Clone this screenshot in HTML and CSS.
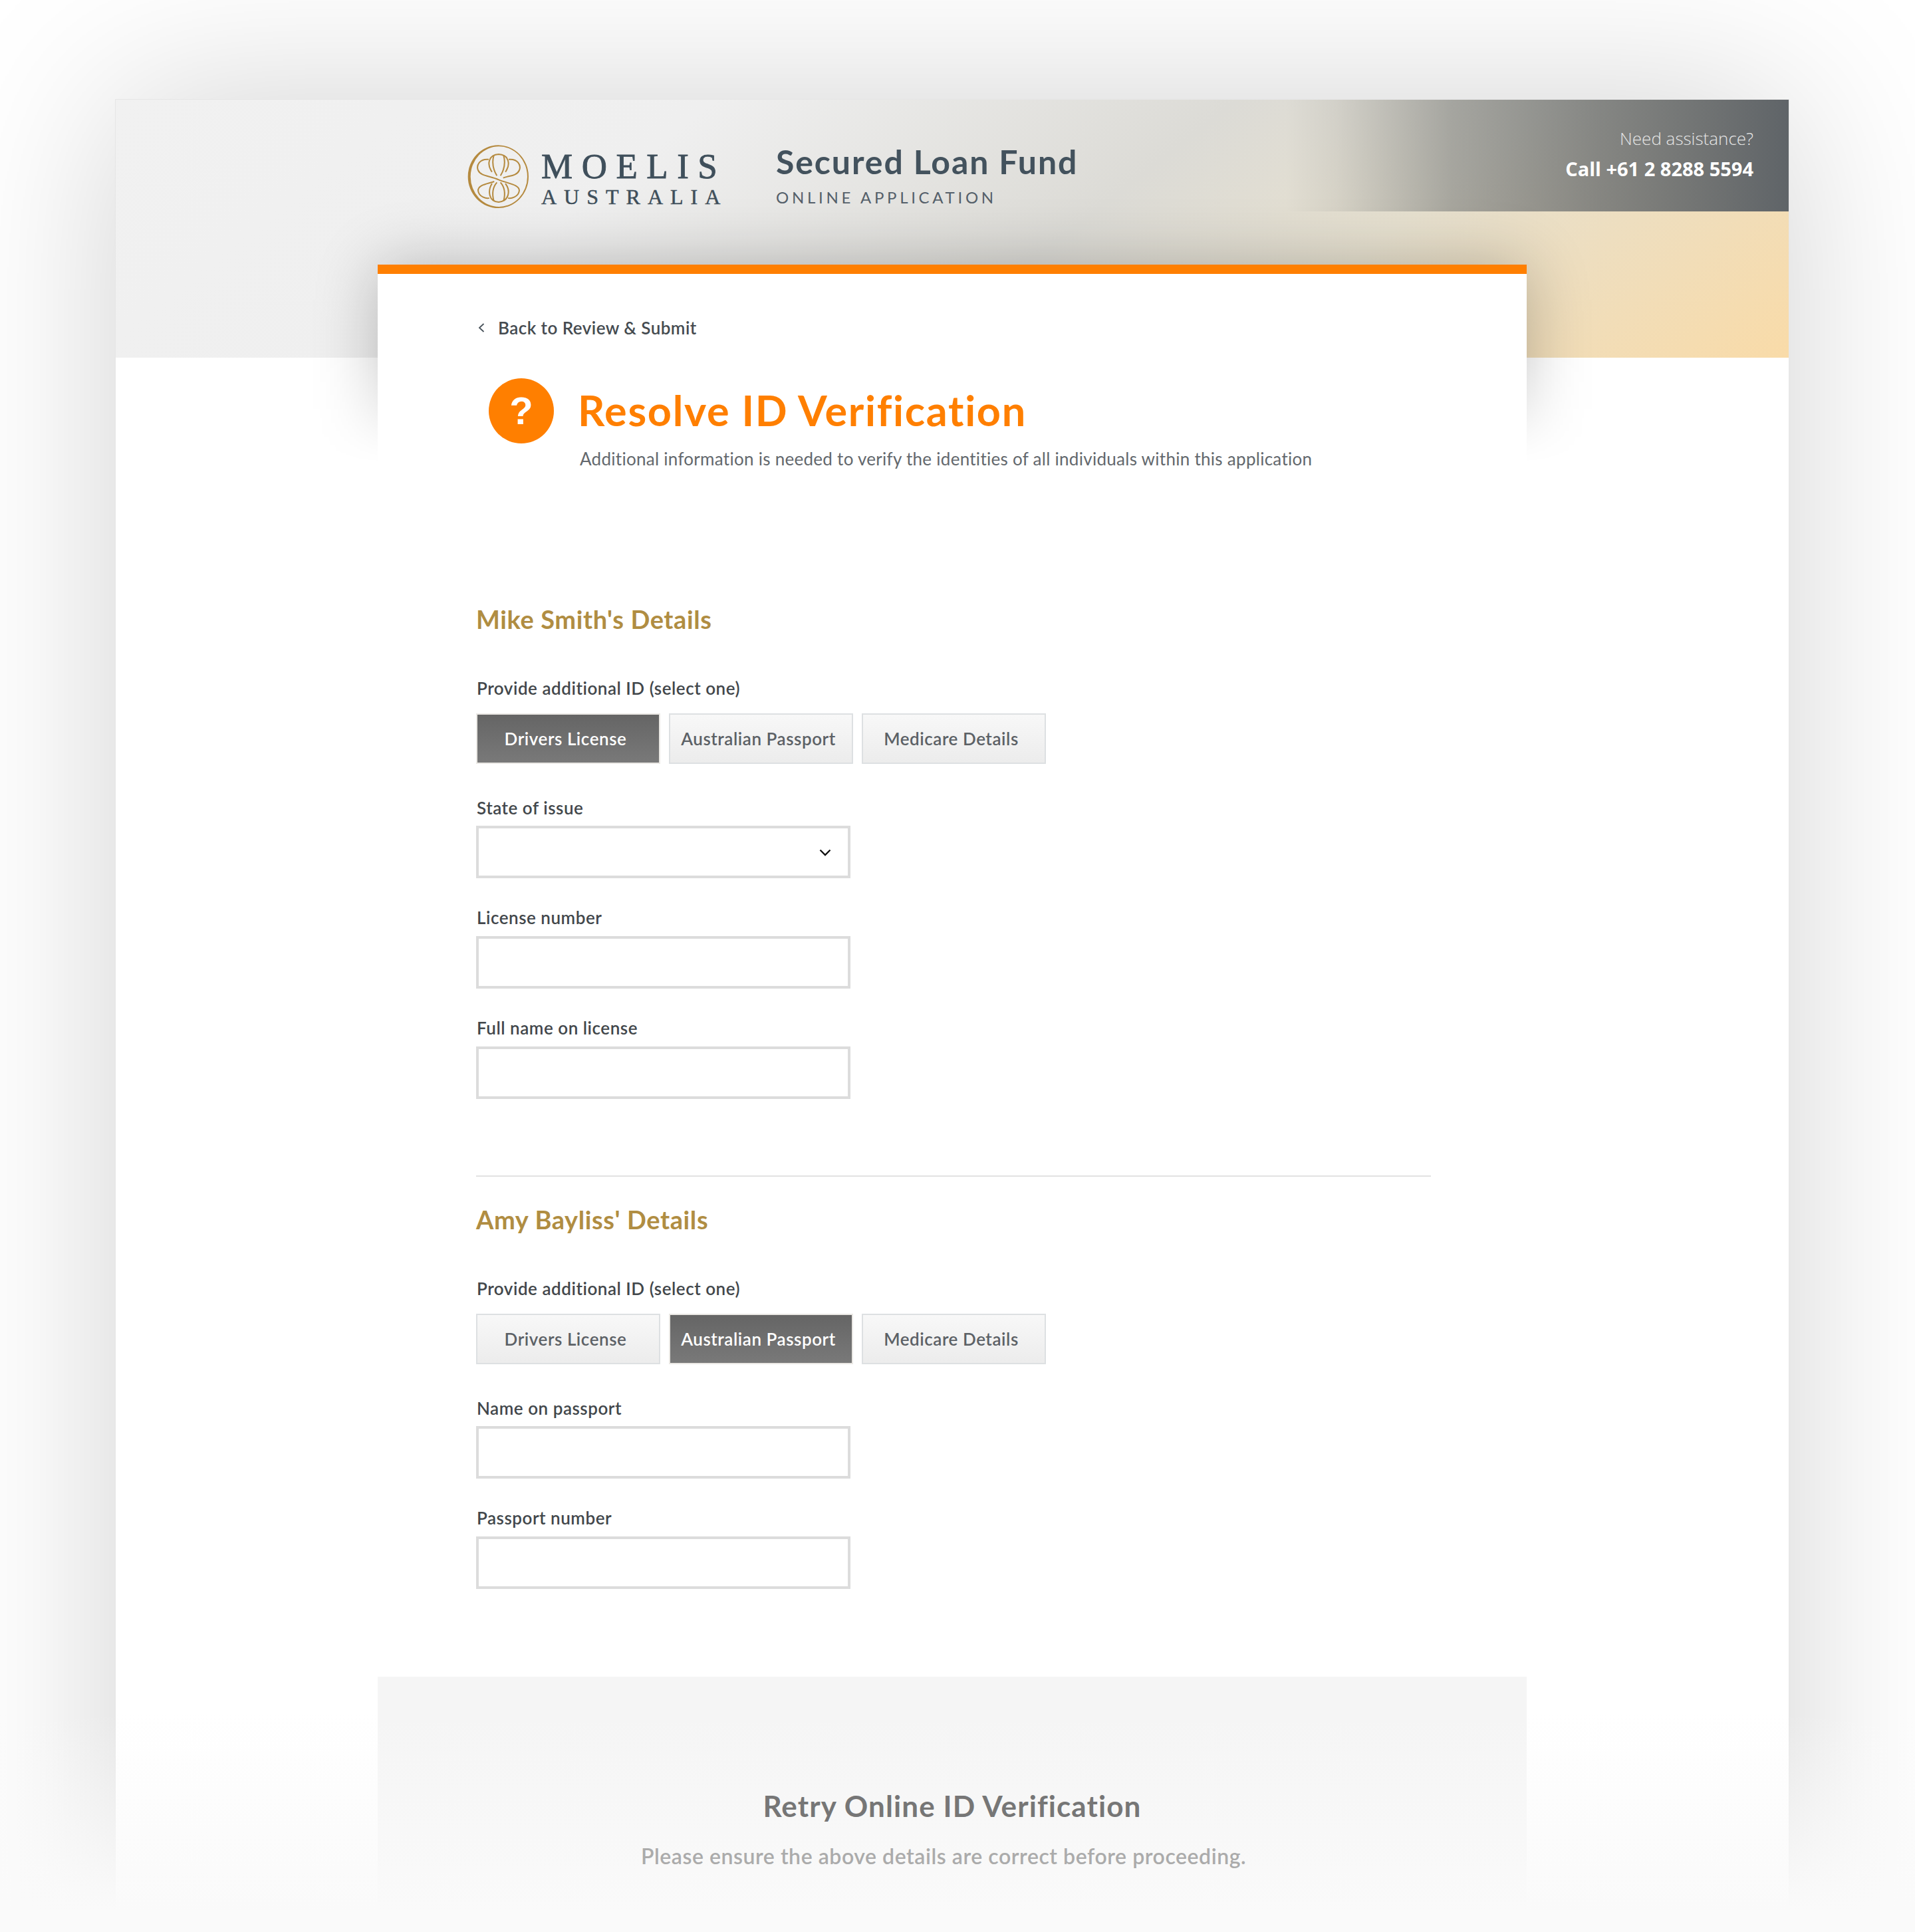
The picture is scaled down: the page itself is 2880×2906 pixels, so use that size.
FILE: index.html
```html
<!DOCTYPE html>
<html lang="en">
<head>
<meta charset="utf-8">
<title>Resolve ID Verification</title>
<link rel="stylesheet" href="styles.css">
</head>
<body>
<div class="page">
  <div class="window">
    <header class="top">
      <svg class="emblem" viewBox="40 84 280 286" aria-hidden="true">
        <path class="emblem-fill" fill-rule="evenodd" d="M42 226a136 141 0 1 0 272 0a136 141 0 1 0-272 0ZM54 226a127 135 0 1 0 254 0a127 135 0 1 0-254 0Z"/>
        <g class="emblem-line">
          <path d="M135 149C95 145 78 175 88 198C100 225 140 222 180 240C225 258 275 262 272 290C268 318 235 325 222 322"/>
          <path d="M225 149C265 145 282 175 272 198C260 225 222 222 200 232"/>
          <path d="M160 248C135 258 85 262 88 290C92 318 125 325 138 322"/>
          <path d="M150 205C125 170 135 128 180 126C225 128 235 170 210 205"/>
          <path d="M158 131C150 160 152 190 172 222"/>
          <path d="M202 131C210 160 208 190 188 222"/>
          <path d="M150 257C130 290 135 338 180 340C225 338 235 290 210 257"/>
          <path d="M172 252C152 275 150 305 158 335"/>
          <path d="M188 252C208 275 210 305 202 335"/>
        </g>
      </svg>
      <div class="wordmark">
        <span class="wordmark-main">MOELIS</span>
        <span class="wordmark-sub">AUSTRALIA</span>
      </div>
      <div class="product">
        <div class="product-name">Secured Loan Fund</div>
        <div class="product-sub">ONLINE APPLICATION</div>
      </div>
      <div class="help">
        <div class="help-q">Need assistance?</div>
        <div class="help-tel">Call +61 2 8288 5594</div>
      </div>
    </header>

    <div class="card-wrap">
      <div class="card-glow"></div>
      <main class="card">
        <div class="card-body">
          <a class="back">
            <svg class="back-icon" viewBox="0 0 10 14" aria-hidden="true"><path d="M8.5 1L2 7l6.500 6"/></svg>
            <span>Back to Review &amp; Submit</span>
          </a>
          <div class="intro">
            <div class="badge">?</div>
            <div class="intro-text">
              <h1>Resolve ID Verification</h1>
              <p>Additional information is needed to verify the identities of all individuals within this application</p>
            </div>
          </div>

          <section class="person person-first">
            <h2>Mike Smith's Details</h2>
            <div class="label label-choice">Provide additional ID (select one)</div>
            <div class="choices">
              <button class="choice is-on">Drivers License</button>
              <button class="choice">Australian Passport</button>
              <button class="choice">Medicare Details</button>
            </div>
            <label class="label label-after-choice">State of issue</label>
            <div class="select-wrap">
              <select class="field"></select>
              <svg class="select-icon" viewBox="0 0 18 11" aria-hidden="true"><path d="M1.500 1.500L9 9l7.500-7.500"/></svg>
            </div>
            <label class="label label-field">License number</label>
            <input class="field" type="text">
            <label class="label label-field">Full name on license</label>
            <input class="field" type="text">
          </section>

          <hr class="rule">

          <section class="person">
            <h2>Amy Bayliss' Details</h2>
            <div class="label label-choice">Provide additional ID (select one)</div>
            <div class="choices">
              <button class="choice">Drivers License</button>
              <button class="choice is-on">Australian Passport</button>
              <button class="choice">Medicare Details</button>
            </div>
            <label class="label label-after-choice">Name on passport</label>
            <input class="field" type="text">
            <label class="label label-field">Passport number</label>
            <input class="field" type="text">
          </section>
        </div>

        <footer class="retry">
          <h3>Retry Online ID Verification</h3>
          <p>Please ensure the above details are correct before proceeding.</p>
        </footer>
      </main>
    </div>
  </div>
  <div class="fade"></div>
</div>
</body>
</html>
```

FILE: styles.css
```css
* { box-sizing: border-box; }
html, body { margin: 0; padding: 0; background: #fff; }
body { font-family: Lato, "Open Sans", sans-serif; }

.page {
  position: relative;
  height: 2906px;
  overflow: hidden;
  padding: 149px 0 0 173px;
}

.window {
  width: 2518px;
  min-height: 2800px;
  border: 1px solid #e6e6e6;
  border-width: 1px 1px 0 1px;
  box-shadow: 0 0 250px rgba(0, 0, 0, .18);
  background-color: #fff;
  background-image:
    linear-gradient(90deg, rgba(95, 100, 104, 0) 0, rgba(95, 100, 104, .1) 10%, rgba(95, 100, 104, .47) 33%, rgba(95, 100, 104, .72) 62%, #5f6468 100%),
    linear-gradient(142deg, #f1f1f1 0, #efefef 30%, #dcdbd6 56%, #e6e0cf 72%, #f9dba8 100%);
  background-size: 756px 168px, 100% 388px;
  background-position: right top, left top;
  background-repeat: no-repeat;
}

/* header */
.top {
  height: 248px;
  display: flex;
  align-items: flex-start;
  padding: 68px 53px 0 529px;
}
.emblem { width: 94px; height: 96px; flex: none; }
.emblem-fill { fill: #b58a3f; }
.emblem-line path { fill: none; stroke: #b58a3f; stroke-width: 6; }

.wordmark {
  width: 298px;
  margin-left: 17px;
  padding-top: 4px;
  font-family: "Liberation Serif", serif;
  color: #3f4f5b;
}
.wordmark span { display: block; white-space: nowrap; }
.wordmark-main { font-size: 53px; line-height: 56px; letter-spacing: 13.500px; -webkit-text-stroke: .8px #3f4f5b; }
.wordmark-sub { font-size: 32px; line-height: 34px; letter-spacing: 11px; margin-top: 1px; -webkit-text-stroke: .5px #3f4f5b; }

.product { margin-left: 55px; color: #43525d; }
.product-name { font-size: 50px; line-height: 60px; font-weight: 700; letter-spacing: 1.900px; white-space: nowrap; margin-top: -5px; }
.product-sub { font-size: 24px; line-height: 30px; letter-spacing: 4.700px; color: #55606a; margin-top: 9px; white-space: nowrap; }

.help { margin-left: auto; text-align: right; font-family: "Open Sans", sans-serif; color: #fff; margin-top: -28px; }
.help-q { font-size: 26px; line-height: 36px; font-weight: 300; color: #e6e6e6; }
.help-tel { font-size: 29px; line-height: 40px; font-weight: 700; margin-top: 8px; white-space: nowrap; }

/* card */
.card-wrap { position: relative; width: 1728px; margin-left: 394px; }
.card-glow {
  position: absolute;
  top: -160px;
  left: -200px;
  right: -200px;
  height: 460px;
  -webkit-mask-image: linear-gradient(#000 0, #000 64%, transparent 100%);
  mask-image: linear-gradient(#000 0, #000 64%, transparent 100%);
}
.card-glow::before {
  content: "";
  position: absolute;
  top: 160px;
  left: 200px;
  right: 200px;
  bottom: 0;
  box-shadow: 0 0 90px rgba(0, 0, 0, .24);
}
.card { position: relative; background: #fff; border-top: 14px solid #ff7f00; }
.card-body { padding: 66px 144px 132px 148px; }

.back {
  display: flex;
  align-items: center;
  height: 30px;
  font-size: 26px;
  line-height: 30px;
  font-weight: 600;
  letter-spacing: .45px;
  color: #454b50;
}
.back-icon { width: 10px; height: 14px; margin: 0 20px 0 3px; flex: none; }
.back-icon path { fill: none; stroke: #48525a; stroke-width: 1.800; }

.intro { display: flex; margin-top: 61px; }
.badge {
  width: 98px;
  height: 98px;
  flex: none;
  margin-left: 19px;
  border-radius: 50%;
  background: #ff7f00;
  color: #fff;
  font-family: "Liberation Sans", sans-serif;
  font-weight: 700;
  font-size: 58px;
  line-height: 98px;
  text-align: center;
}
.intro-text { margin-left: 36px; padding-top: 13px; }
h1 { margin: 0; font-size: 63px; line-height: 70px; font-weight: 700; letter-spacing: 1.700px; color: #ff7f00; white-space: nowrap; }
.intro-text p { margin: 21px 0 0 3px; font-size: 26px; line-height: 34px; letter-spacing: .28px; color: #63686d; white-space: nowrap; }

.person-first { margin-top: 200px; }
h2 { margin: 0; font-size: 38px; line-height: 48px; padding-bottom: 2px; font-weight: 700; letter-spacing: .6px; color: #b08d42; white-space: nowrap; }

.label { display: block; margin-left: 1px; font-size: 26px; line-height: 30px; font-weight: 600; letter-spacing: .53px; color: #42474b; }
.label-choice { margin-top: 63px; margin-bottom: 23px; }
.label-after-choice { margin-top: 51px; margin-bottom: 12px; }
.label-field { margin-top: 44px; margin-bottom: 13px; }

.choices { display: flex; gap: 13px; }
.choice {
  width: 277px;
  height: 76px;
  padding: 0 8px 0 0;
  font-family: Lato, "Open Sans", sans-serif;
  font-size: 26px;
  font-weight: 600;
  letter-spacing: .55px;
  color: #5c6166;
  border: 2px solid #dde0e2;
  background: linear-gradient(#f8f8f8, #ececec);
}
.choice.is-on {
  color: #fff;
  border-color: #eae8e4;
  background: linear-gradient(#656565, #797979);
}

.field {
  display: block;
  width: 563px;
  height: 79px;
  padding: 0 20px;
  border: 4px solid #dcdcdc;
  border-radius: 0;
  background: #fff;
  appearance: none;
  -webkit-appearance: none;
}
.select-wrap { position: relative; width: 563px; }
.select-icon { position: absolute; top: 35px; right: 29px; width: 18px; height: 11px; }
.select-icon path { fill: none; stroke: #111; stroke-width: 2.400; }

.rule { height: 2px; margin: 115px 0 40px; border: 0; background: #e2e2e2; }

/* footer panel */
.retry { height: 500px; padding-top: 164px; background: #f5f5f5; text-align: center; }
.retry h3, .retry p { position: relative; z-index: 1; }
h3 { margin: 0; font-size: 44px; line-height: 60px; font-weight: 700; letter-spacing: 1.100px; color: #767676; white-space: nowrap; }
.retry p { margin: 24px 26px 0 0; font-size: 32px; line-height: 44px; font-weight: 600; letter-spacing: .55px; color: #ababab; white-space: nowrap; }

.fade {
  position: absolute;
  left: 0;
  right: 0;
  bottom: 0;
  height: 330px;
  background: linear-gradient(rgba(250, 250, 250, 0), #fafafa 90%);
  pointer-events: none;
}
```
